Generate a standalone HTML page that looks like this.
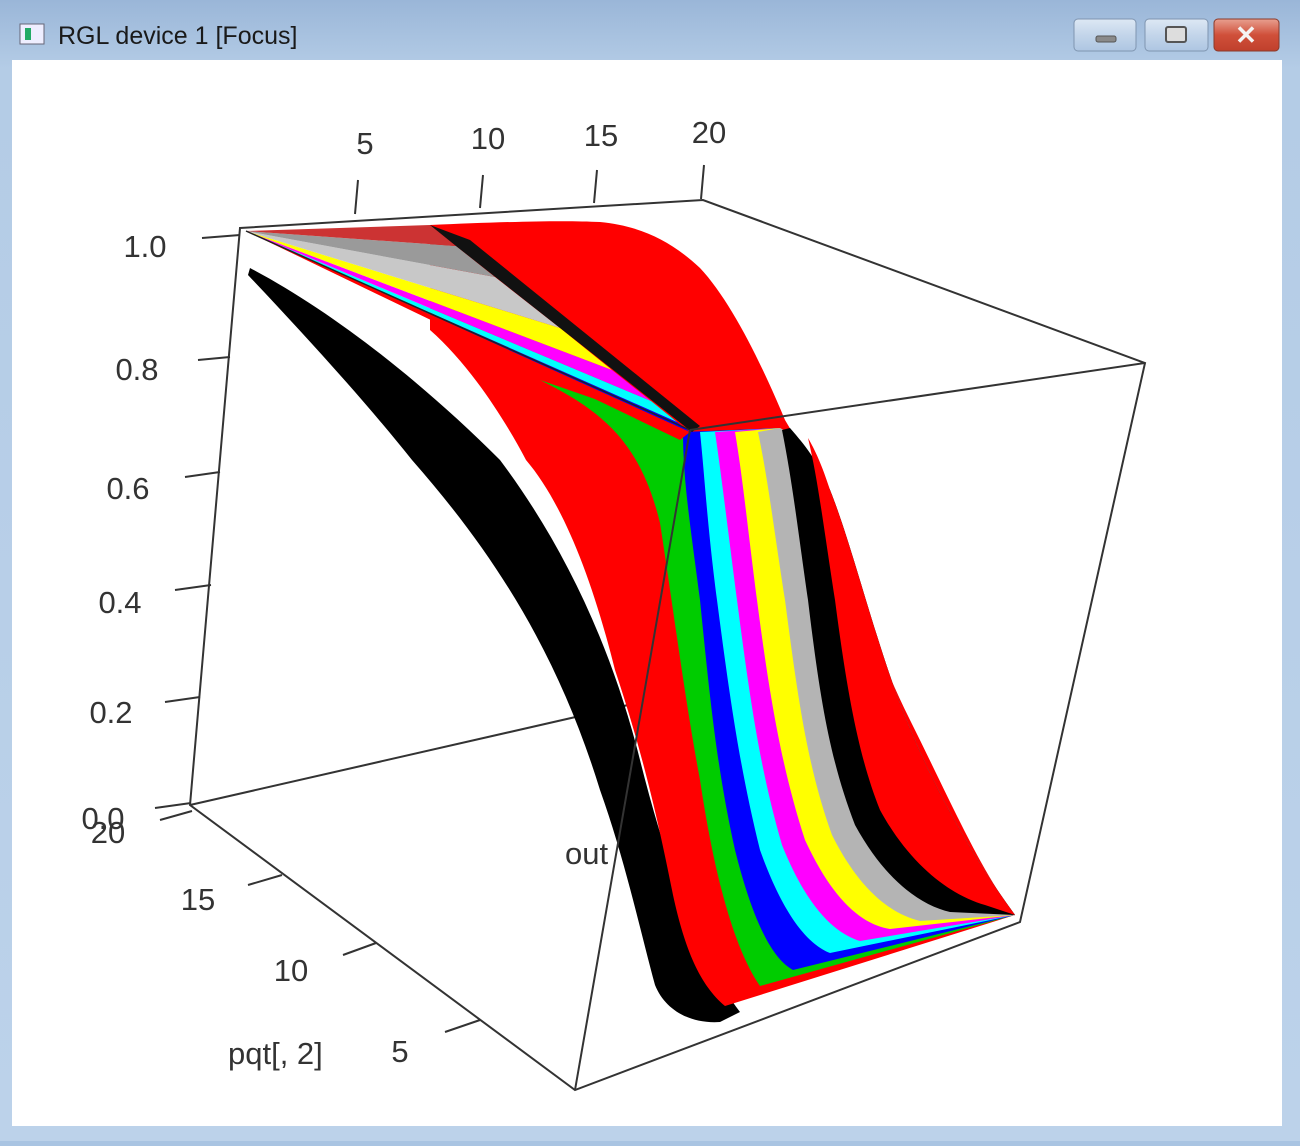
<!DOCTYPE html>
<html><head><style>
body{margin:0;width:1300px;height:1141px;overflow:hidden;background:#a9c4e2;font-family:"Liberation Sans",sans-serif;}
</style></head><body>
<svg width="1300" height="1141" viewBox="0 0 1300 1141" xmlns="http://www.w3.org/2000/svg">
<defs>
<linearGradient id="fr" x1="0" y1="0" x2="0" y2="1"><stop offset="0" stop-color="#9ab6d8"/><stop offset="0.06" stop-color="#b4cce6"/><stop offset="1" stop-color="#bcd2ea"/></linearGradient>
<linearGradient id="bt" x1="0" y1="0" x2="0" y2="1"><stop offset="0" stop-color="#dde8f4"/><stop offset="0.5" stop-color="#c3d5ea"/><stop offset="1" stop-color="#aec6e2"/></linearGradient>
<linearGradient id="cl" x1="0" y1="0" x2="0" y2="1"><stop offset="0" stop-color="#e8a090"/><stop offset="0.5" stop-color="#d0503a"/><stop offset="1" stop-color="#c0402c"/></linearGradient>
</defs>
<rect width="1300" height="1141" fill="url(#fr)"/>
<rect x="20" y="24" width="24" height="20" fill="#eef" stroke="#667" stroke-width="1"/>
<rect x="25" y="28" width="6" height="12" fill="#2a6"/>
<text x="58" y="44" font-size="25" fill="#1a1a1a">RGL device 1 [Focus]</text>
<rect x="1074" y="19" width="62" height="32" rx="4" fill="url(#bt)" stroke="#7f95b0"/>
<rect x="1096" y="36" width="20" height="6" rx="2" fill="#8a8a8a" stroke="#555" stroke-width="1"/>
<rect x="1145" y="19" width="63" height="32" rx="4" fill="url(#bt)" stroke="#7f95b0"/>
<rect x="1166" y="27" width="20" height="15" rx="2" fill="#ddd" stroke="#555" stroke-width="2"/>
<rect x="1214" y="19" width="65" height="32" rx="4" fill="url(#cl)" stroke="#8a3a2a"/>
<text x="1246" y="44" font-size="26" font-weight="bold" fill="#f4f4f4" text-anchor="middle">✕</text>
<rect x="12" y="60" width="1270" height="1066" fill="#fff"/>

<line x1="190" y1="805" x2="650" y2="700" stroke="#333" stroke-width="2"/>

<!-- left black band -->
<path d="M250,268 C330,310 420,380 500,460 C560,540 610,640 640,760 C665,860 700,960 740,1012 L720,1022 C690,1024 665,1010 655,985 C640,930 625,860 600,790 C560,660 500,560 412,460 C360,395 300,330 248,275 Z" fill="#000"/>

<!-- big red -->
<path d="M430,225 C500,222 560,220 600,222 C640,226 670,240 700,268 C730,300 760,360 785,420 C815,470 830,500 840,540 C860,600 880,660 910,720 C950,800 980,870 1015,915 L725,1006 C700,985 685,950 673,895 C660,830 645,760 615,670 C590,570 560,500 526,460 C505,420 470,365 430,330 Z" fill="#f00"/>

<g>
<path d="M540,380 C600,410 640,440 660,523 C675,620 685,700 700,780 C715,880 735,950 760,986 L1015,915 C960,840 920,760 895,690 C870,620 850,540 830,490 C815,455 800,440 780,428 L690,432 Z" fill="#0c0"/>
<path d="M683,432 C683,480 690,523 700,600 C710,700 717,769 735,850 C755,930 775,960 793,970 L1015,915 C960,840 920,760 895,690 C870,620 850,540 830,490 C815,455 800,440 780,428 Z" fill="#00f"/>
<path d="M700,432 C705,480 707,523 717,600 C730,700 740,769 760,850 C785,920 810,945 830,953 L1015,915 C960,840 920,760 895,690 C870,620 850,540 830,490 C815,455 800,440 780,428 Z" fill="#0ff"/>
<path d="M715,432 C722,480 727,523 737,600 C750,700 760,769 782,845 C810,915 840,935 860,941 L1015,915 C960,840 920,760 895,690 C870,620 850,540 830,490 C815,455 800,440 780,428 Z" fill="#f0f"/>
<path d="M735,432 C743,480 747,523 757,600 C770,700 782,769 805,840 C835,905 865,925 890,929 L1015,915 C960,840 920,760 895,690 C870,620 850,540 830,490 C815,455 800,440 780,428 Z" fill="#ff0"/>
<path d="M758,432 C768,480 773,523 785,600 C798,700 808,769 832,835 C862,895 895,915 920,921 L1015,915 C960,840 920,760 895,690 C870,620 850,540 830,490 C815,455 800,440 780,428 Z" fill="#b4b4b4"/>
<path d="M782,430 C792,480 797,523 808,600 C820,700 830,760 855,825 C885,880 920,905 950,912 L1015,915 C960,840 920,760 895,690 C870,620 850,540 830,490 C815,455 800,440 790,428 Z" fill="#000"/>
<path d="M808,438 C818,480 823,523 835,600 C848,700 860,760 880,810 C910,865 950,895 985,905 L1015,915 C960,840 920,760 895,690 C870,620 850,540 830,490 C822,465 815,450 808,438 Z" fill="#f00"/>
</g>

<path d="M246,231 L690,432 L680,440 Z" fill="#f00"/>
<path d="M246,231 L690,432 L677,422 Z" fill="#00f"/>
<path d="M246,231 L677,422 L651,401 Z" fill="#0ff"/>
<path d="M246,231 L651,401 L612,370 Z" fill="#f0f"/>
<path d="M246,231 L612,370 L560,328 Z" fill="#ff0"/>
<path d="M246,231 L560,328 L495,277 Z" fill="#c8c8c8"/>
<path d="M246,231 L495,277 L456,246 Z" fill="#9a9a9a"/>
<path d="M246,231 L456,246 L430,225 Z" fill="#c33"/>
<path d="M430,225 L456,246 L692,432 L700,426 L470,240 Z" fill="#111"/>
<path d="M246,231 L690,430" stroke="#222" stroke-width="1.5"/>

<g stroke="#333" stroke-width="2" fill="none">
<path d="M240,228 L703,200 L1145,363 L1020,922 L575,1090 L190,805 Z"/>
<path d="M690,430 L1145,363"/>
<path d="M690,430 L575,1090"/>
<path d="M355,214 L358,180 M480,208 L483,175 M594,203 L597,170 M701,199 L704,165"/>
<path d="M240,235 L202,238 M230,357 L198,360 M220,472 L185,477 M211,585 L175,590 M200,697 L165,702 M191,803 L155,808"/>
<path d="M192,811 L160,820 M282,875 L248,885 M376,943 L343,955 M480,1020 L445,1032"/>
</g>

<g font-size="31" fill="#333">
<text x="365" y="154" text-anchor="middle">5</text>
<text x="488" y="149" text-anchor="middle">10</text>
<text x="601" y="146" text-anchor="middle">15</text>
<text x="709" y="143" text-anchor="middle">20</text>
<text x="145" y="257" text-anchor="middle">1.0</text>
<text x="137" y="380" text-anchor="middle">0.8</text>
<text x="128" y="499" text-anchor="middle">0.6</text>
<text x="120" y="613" text-anchor="middle">0.4</text>
<text x="111" y="723" text-anchor="middle">0.2</text>
<text x="103" y="829" text-anchor="middle">0.0</text>
<text x="108" y="843" text-anchor="middle">20</text>
<text x="198" y="910" text-anchor="middle">15</text>
<text x="291" y="981" text-anchor="middle">10</text>
<text x="400" y="1062" text-anchor="middle">5</text>
<text x="228" y="1064">pqt[, 2]</text>
<text x="565" y="864">out</text>
</g>
</svg>
</body></html>
